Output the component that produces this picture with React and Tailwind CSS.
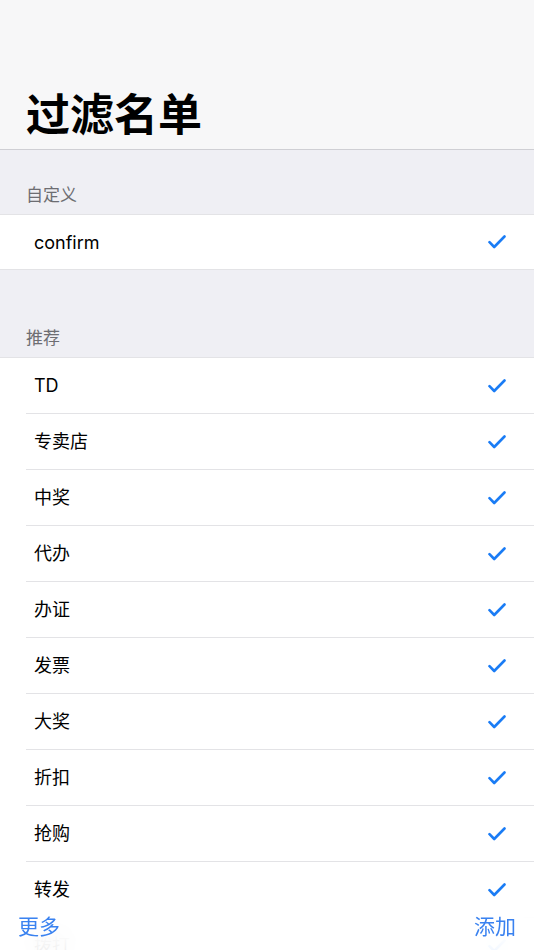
import React from "react";

const font = { fontFamily: '"Inter", "Noto Sans CJK SC", sans-serif' };

const recommended = ["TD", "专卖店", "中奖", "代办", "办证", "发票", "大奖", "折扣", "抢购", "转发", "拨打", "贷款"];

const Check = () => (
  <svg width="18" height="14" viewBox="0 0 18 14" fill="none" className="shrink-0">
    <path d="M1.5 7.2 L6.2 12 L16.5 1.5" stroke="#1a7cf5" strokeWidth="2.6" strokeLinecap="round" strokeLinejoin="round" />
  </svg>
);

const Row = ({ label, last, height = "h-[56px]" }) => (
  <div className={`flex items-stretch bg-white pl-[26px] ${height}`}>
    <div className={`flex flex-1 items-center justify-between pl-[8px] pr-[28px] ${last ? "" : "border-b border-[#e3e3e6]"}`}>
      <span className="text-[18px] text-black">{label}</span>
      <Check />
    </div>
  </div>
);

const SectionHeader = ({ title, height }) => (
  <div className={`flex items-end bg-[#efeff4] px-[26px] pb-[10px] ${height}`}>
    <span className="text-[17px] leading-none text-[#6d6d72]">{title}</span>
  </div>
);

export default function App() {
  return (
    <div className="relative h-[950px] w-[534px] overflow-hidden bg-[#efeff4]" style={font}>
      <div className="flex h-[150px] items-end border-b border-[#cfcfd4] bg-[#f7f7f8] px-[26px] pb-[12px]">
        <h1 className="text-[44px] font-bold leading-none text-black">过滤名单</h1>
      </div>

      <SectionHeader title="自定义" height="h-[64px]" />
      <div className="border-y border-[#e3e3e6]">
        <Row label="confirm" last height="h-[54px]" />
      </div>

      <SectionHeader title="推荐" height="h-[87px]" />
      <div className="border-t border-[#e3e3e6]">
        {recommended.map((item) => (
          <Row key={item} label={item} />
        ))}
      </div>

      <div className="absolute bottom-0 left-0 right-0 flex h-[46px] items-center justify-between bg-white/90 px-[18px] backdrop-blur-md">
        <button type="button" className="text-[21px] text-[#3a82f0]">更多</button>
        <button type="button" className="text-[21px] text-[#3a82f0]">添加</button>
      </div>
    </div>
  );
}
